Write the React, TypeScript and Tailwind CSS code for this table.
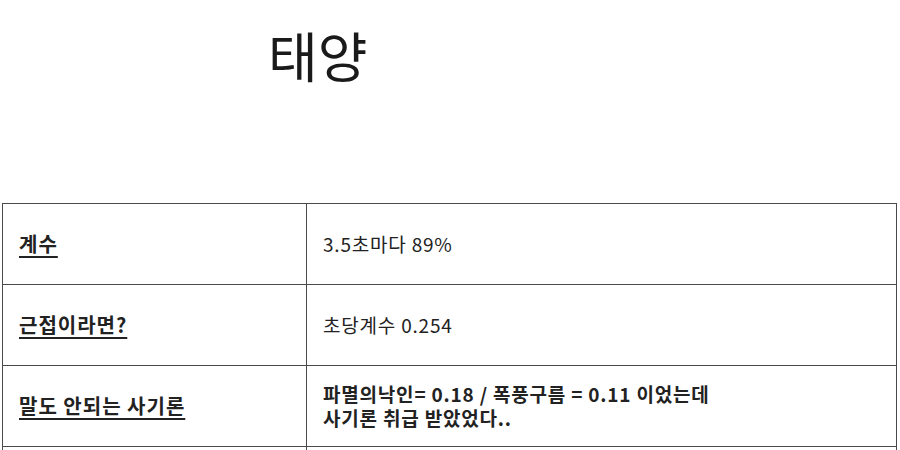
import React from "react";

const rows: { label: string; value: React.ReactNode; bold?: boolean }[] = [
  { label: "계수", value: "3.5초마다 89%" },
  { label: "근접이라면?", value: "초당계수 0.254" },
  {
    label: "말도 안되는 사기론",
    value: (
      <>
        파멸의낙인= 0.18 / 폭풍구름 = 0.11 이었는데
        <br />
        사기론 취급 받았었다..
      </>
    ),
    bold: true,
  },
  { label: "", value: "" },
];

export default function App() {
  return (
    <div
      className="w-[900px] h-[450px] overflow-hidden bg-white text-[#222]"
      style={{ fontFamily: '"Noto Sans CJK KR", "Noto Sans", sans-serif' }}
    >
      <div className="pt-[24px] pl-[268px] text-[54px] leading-[62px] font-normal text-[#1a1a1a]">
        태양
      </div>
      <table className="mt-[117px] ml-[2px] w-[895px] border-collapse">
        <tbody>
          {rows.map((r, i) => (
            <tr key={i} className="h-[81px]">
              <td className="w-[304px] border-[1.5px] border-[#4a4a4a] pl-[16px] align-middle">
                <span className="text-[20px] tracking-[1px] font-bold underline underline-offset-[4px] decoration-[1.5px]">
                  {r.label}
                </span>
              </td>
              <td
                className={`border-[1.5px] border-[#4a4a4a] pl-[16px] align-middle text-[19px] tracking-[0.8px] leading-[24px] ${
                  r.bold ? "font-semibold" : ""
                }`}
              >
                {r.value}
              </td>
            </tr>
          ))}
        </tbody>
      </table>
    </div>
  );
}
